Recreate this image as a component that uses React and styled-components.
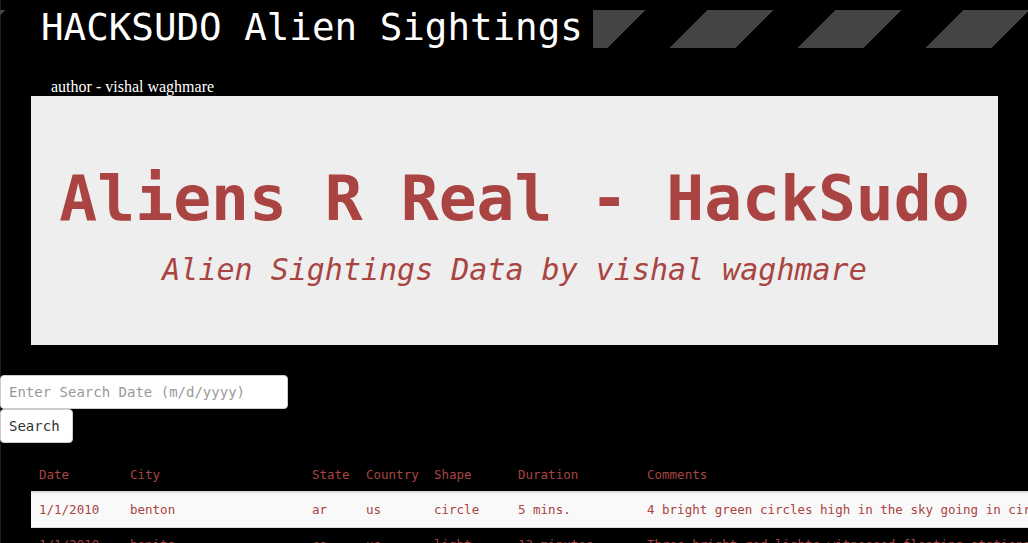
import React from 'react'
import styled, { createGlobalStyle } from 'styled-components'

const GlobalStyle = createGlobalStyle`
  html, body {
    margin: 0;
    padding: 0;
    background: #000;
  }
`

const mono = `"DejaVu Sans Mono", "Liberation Mono", monospace`

const Page = styled.div`
  position: relative;
  min-height: 100vh;
  overflow: hidden;
  background: #000;
  box-shadow: inset 1px 0 0 #1c1c1c;
`

const Header = styled.header`
  display: flex;
  margin-top: 10px;
  height: 38px;
  background: repeating-linear-gradient(
    135deg,
    #444 0px,
    #444 3.54px,
    transparent 3.54px,
    transparent 48.08px,
    #444 48.08px,
    #444 90.51px
  );
`

const Title = styled.h1`
  margin: 0 0 0 6px;
  padding: 1px 10px 5px 35px;
  background: #000;
  color: #fff;
  font-family: ${mono};
  font-weight: normal;
  font-size: 37.5px;
  line-height: 32px;
  white-space: nowrap;
`

const Author = styled.div`
  margin-top: 30px;
  padding-left: 51px;
  color: #fff;
  font-family: "Liberation Serif", serif;
  font-size: 16px;
  line-height: 18px;
`

const Jumbotron = styled.section`
  margin: 0 30px 30px 31px;
  padding: 68px 0 57px;
  background: #eee;
  color: #a94442;
  text-align: center;
  font-family: ${mono};
`

const BigTitle = styled.h2`
  margin: 0 0 19px;
  font-size: 63px;
  line-height: 69px;
  font-weight: bold;
  white-space: nowrap;
`

const Lead = styled.p`
  margin: 0;
  font-size: 30px;
  line-height: 36px;
  font-style: italic;
  white-space: nowrap;
`

const SearchForm = styled.form`
  display: flex;
  flex-direction: column;
  align-items: flex-start;
`

const SearchInput = styled.input`
  box-sizing: border-box;
  width: 288px;
  height: 34px;
  margin: 0;
  padding: 6px 8px;
  border: 1px solid #ccc;
  border-radius: 4px;
  background: #fff;
  font-family: ${mono};
  font-size: 14px;
  color: #555;
  outline: none;

  &::placeholder {
    color: #999;
  }
`

const SearchButton = styled.button`
  box-sizing: border-box;
  height: 34px;
  margin: 0;
  padding: 6px 12px 6px 8px;
  border: 1px solid #ccc;
  border-radius: 4px;
  background: #fff;
  color: #333;
  font-family: ${mono};
  font-size: 14px;
  line-height: 20px;
  cursor: pointer;
`

const TableWrap = styled.div`
  margin: 13px 0 0 31px;
`

const Table = styled.table`
  width: 1500px;
  table-layout: fixed;
  border-collapse: collapse;
  border-spacing: 0;
  font-family: ${mono};
  font-size: 12.5px;
  line-height: 18.57px;
  color: #a94442;
`

const Th = styled.th`
  padding: 10px 8px 6px;
  text-align: left;
  font-weight: normal;
  border-bottom: 2px solid #ddd;
  white-space: nowrap;
`

const Row = styled.tr`
  background: ${p => (p.$striped ? '#f9f9f9' : 'transparent')};
`

const Td = styled.td`
  padding: 8px;
  border-top: 1px solid #ddd;
  white-space: nowrap;
  overflow: visible;
`

const columns = [
  { key: 'datetime', label: 'Date', width: 91 },
  { key: 'city', label: 'City', width: 182 },
  { key: 'state', label: 'State', width: 54 },
  { key: 'country', label: 'Country', width: 68 },
  { key: 'shape', label: 'Shape', width: 84 },
  { key: 'duration', label: 'Duration', width: 129 },
  { key: 'comments', label: 'Comments' },
]

const sightings = [
  {
    datetime: '1/1/2010',
    city: 'benton',
    state: 'ar',
    country: 'us',
    shape: 'circle',
    duration: '5 mins.',
    comments: '4 bright green circles high in the sky going in circles then one bright green light at my front door.',
  },
  {
    datetime: '1/1/2010',
    city: 'bonita',
    state: 'ca',
    country: 'us',
    shape: 'light',
    duration: '13 minutes',
    comments: 'Three bright red lights witnessed floating stationary over San Diego New Years Day 2010',
  },
  {
    datetime: '1/1/2010',
    city: 'el cajon',
    state: 'ca',
    country: 'us',
    shape: 'triangle',
    duration: '5 minutes',
    comments: 'Strange triangular object with green and red flashing lights.',
  },
]

const App = () => (
  <Page>
    <GlobalStyle />
    <Header>
      <Title>HACKSUDO Alien Sightings</Title>
    </Header>
    <Author>author - vishal waghmare</Author>
    <Jumbotron>
      <BigTitle>Aliens R Real - HackSudo</BigTitle>
      <Lead>Alien Sightings Data by vishal waghmare</Lead>
    </Jumbotron>
    <SearchForm onSubmit={e => e.preventDefault()}>
      <SearchInput type="text" placeholder="Enter Search Date (m/d/yyyy)" />
      <SearchButton type="submit">Search</SearchButton>
    </SearchForm>
    <TableWrap>
      <Table>
        <colgroup>
          {columns.map(c => (
            <col key={c.key} style={c.width ? { width: c.width } : undefined} />
          ))}
        </colgroup>
        <thead>
          <tr>
            {columns.map(c => (
              <Th key={c.key}>{c.label}</Th>
            ))}
          </tr>
        </thead>
        <tbody>
          {sightings.map((s, i) => (
            <Row key={i} $striped={i % 2 === 0}>
              {columns.map(c => (
                <Td key={c.key}>{s[c.key]}</Td>
              ))}
            </Row>
          ))}
        </tbody>
      </Table>
    </TableWrap>
  </Page>
)

export default App
